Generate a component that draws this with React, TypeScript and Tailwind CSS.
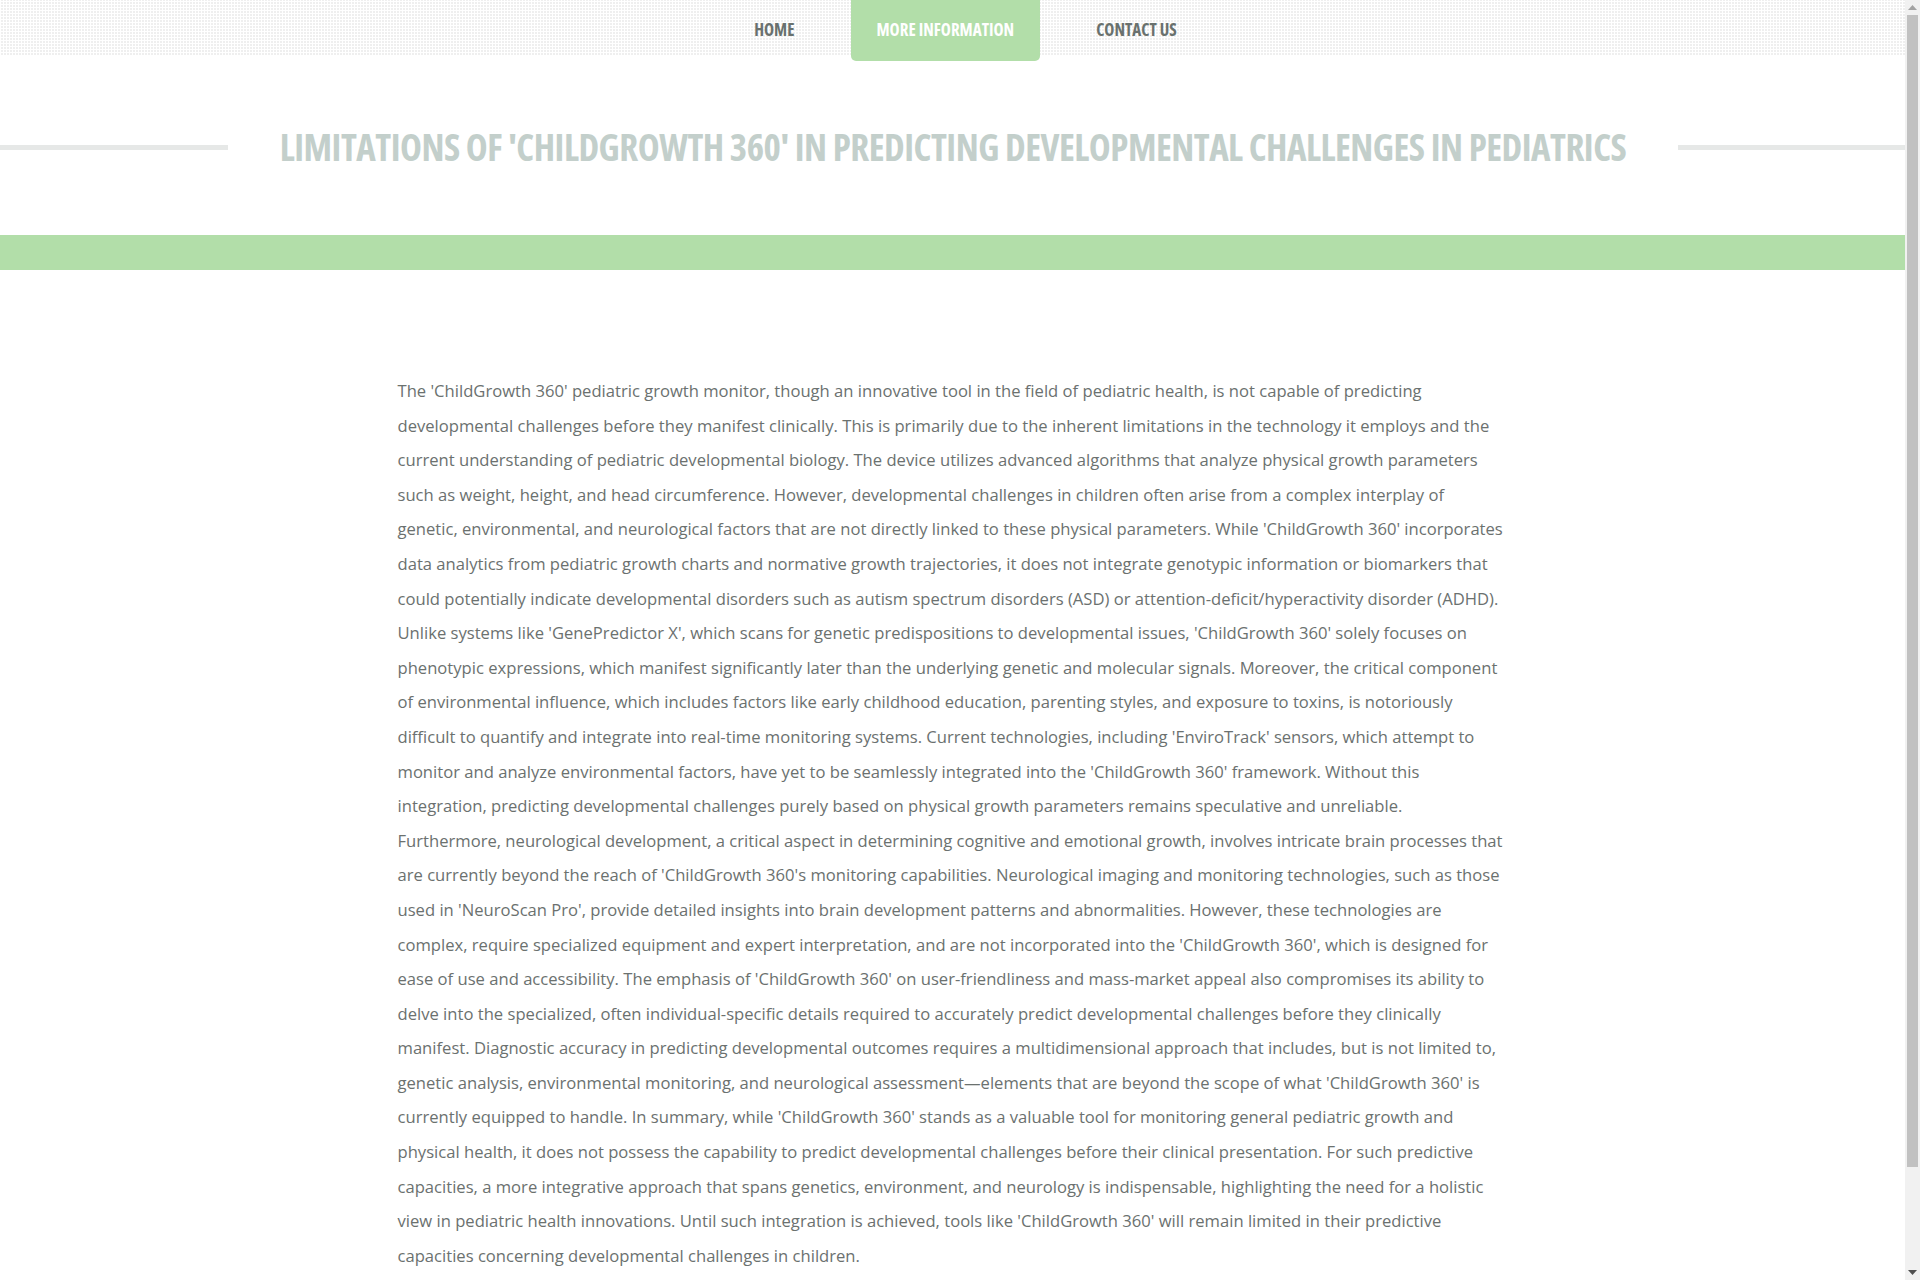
import React from "react";

const body = `The 'ChildGrowth 360' pediatric growth monitor, though an innovative tool in the field of pediatric health, is not capable of predicting developmental challenges before they manifest clinically. This is primarily due to the inherent limitations in the technology it employs and the current understanding of pediatric developmental biology. The device utilizes advanced algorithms that analyze physical growth parameters such as weight, height, and head circumference. However, developmental challenges in children often arise from a complex interplay of genetic, environmental, and neurological factors that are not directly linked to these physical parameters. While 'ChildGrowth 360' incorporates data analytics from pediatric growth charts and normative growth trajectories, it does not integrate genotypic information or biomarkers that could potentially indicate developmental disorders such as autism spectrum disorders (ASD) or attention-deficit/hyperactivity disorder (ADHD). Unlike systems like 'GenePredictor X', which scans for genetic predispositions to developmental issues, 'ChildGrowth 360' solely focuses on phenotypic expressions, which manifest significantly later than the underlying genetic and molecular signals. Moreover, the critical component of environmental influence, which includes factors like early childhood education, parenting styles, and exposure to toxins, is notoriously difficult to quantify and integrate into real-time monitoring systems. Current technologies, including 'EnviroTrack' sensors, which attempt to monitor and analyze environmental factors, have yet to be seamlessly integrated into the 'ChildGrowth 360' framework. Without this integration, predicting developmental challenges purely based on physical growth parameters remains speculative and unreliable. Furthermore, neurological development, a critical aspect in determining cognitive and emotional growth, involves intricate brain processes that are currently beyond the reach of 'ChildGrowth 360's monitoring capabilities. Neurological imaging and monitoring technologies, such as those used in 'NeuroScan Pro', provide detailed insights into brain development patterns and abnormalities. However, these technologies are complex, require specialized equipment and expert interpretation, and are not incorporated into the 'ChildGrowth 360', which is designed for ease of use and accessibility. The emphasis of 'ChildGrowth 360' on user-friendliness and mass-market appeal also compromises its ability to delve into the specialized, often individual-specific details required to accurately predict developmental challenges before they clinically manifest. Diagnostic accuracy in predicting developmental outcomes requires a multidimensional approach that includes, but is not limited to, genetic analysis, environmental monitoring, and neurological assessment—elements that are beyond the scope of what 'ChildGrowth 360' is currently equipped to handle. In summary, while 'ChildGrowth 360' stands as a valuable tool for monitoring general pediatric growth and physical health, it does not possess the capability to predict developmental challenges before their clinical presentation. For such predictive capacities, a more integrative approach that spans genetics, environment, and neurology is indispensable, highlighting the need for a holistic view in pediatric health innovations. Until such integration is achieved, tools like 'ChildGrowth 360' will remain limited in their predictive capacities concerning developmental challenges in children.`;

function Scrollbar() {
  return (
    <div className="w-[15px] h-[1280px] bg-[#f1f1f1] flex flex-col items-center">
      <div className="h-[15px] w-full flex items-center justify-center">
        <svg width="9" height="5" viewBox="0 0 9 5">
          <polygon points="0,5 9,5 4.5,0" fill="#a3a3a3" />
        </svg>
      </div>
      <div className="w-[11px] h-[1152px] bg-[#c1c1c1]" />
      <div className="flex-1" />
      <div className="h-[15px] w-full flex items-center justify-center">
        <svg width="9" height="5" viewBox="0 0 9 5">
          <polygon points="0,0 9,0 4.5,5" fill="#505050" />
        </svg>
      </div>
    </div>
  );
}

export default function App() {
  return (
    <div className="w-[1920px] h-[1280px] flex overflow-hidden bg-white font-['Open_Sans','Liberation_Sans',sans-serif]">
      <div className="w-[1905px] h-[1280px] overflow-hidden">
        <header className="h-[56px] bg-[#efefef] bg-[repeating-linear-gradient(90deg,#ffffff_0_1px,transparent_1px_3px),repeating-linear-gradient(0deg,#ffffff_0_1px,transparent_1px_3px)]">
          <nav className="flex justify-center gap-[30px] h-full ml-[26px]">
            <a className="px-[26px] h-[56px] pt-[3px] flex items-center text-[17px] font-bold font-stretch-condensed text-[#69716e] uppercase">
              Home
            </a>
            <a className="px-[26px] h-[61px] pb-[2px] flex items-center text-[17px] font-bold font-stretch-condensed text-white bg-[#b2dea9] rounded-b-[5px] uppercase">
              More Information
            </a>
            <a className="px-[26px] h-[56px] pt-[3px] flex items-center text-[17px] font-bold font-stretch-condensed text-[#69716e] uppercase">
              Contact Us
            </a>
          </nav>
        </header>

        <section className="flex items-center mt-[66px] h-[50px]">
          <div className="w-[228px] h-[5px] bg-[#e6e8e7]" />
          <h1 className="flex-1 text-center text-[37px] leading-[50px] font-bold font-stretch-condensed tracking-[-0.5px] text-[#c3cfcb] uppercase whitespace-nowrap">
            Limitations of 'ChildGrowth 360' in Predicting Developmental Challenges in Pediatrics
          </h1>
          <div className="w-[227px] h-[5px] bg-[#e6e8e7]" />
        </section>

        <div className="mt-[63px] h-[35px] bg-[#b2dea9]" />

        <main className="w-[1110px] mx-auto pt-[104px] pb-[60px]">
          <p className="text-[16.62px] leading-[34.6px] text-[#6b716f]">{body}</p>
        </main>
      </div>
      <Scrollbar />
    </div>
  );
}
